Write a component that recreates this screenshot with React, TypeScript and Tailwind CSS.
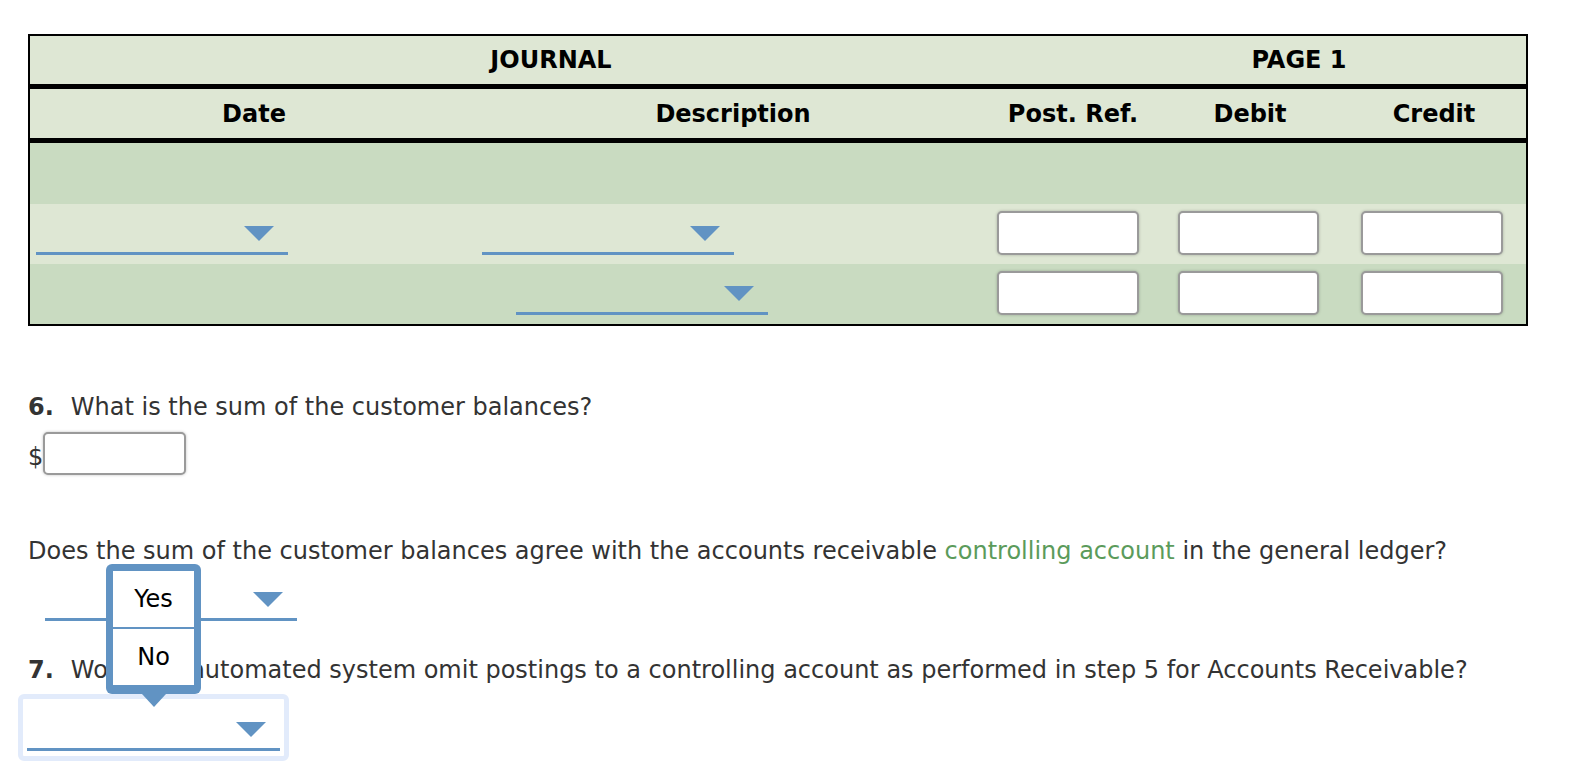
function Caret() {
  return (
    <svg width="30" height="15" viewBox="0 0 30 15" className="block">
      <polygon points="0,0 30,0 15,15" fill="#6193c3" />
    </svg>
  );
}

function Dropdown({ width }: { width: string }) {
  return (
    <div className={`${width} h-[37px] border-b-[3px] border-[#6193c3] flex justify-end items-start pt-[8px] pr-[14px]`}>
      <Caret />
    </div>
  );
}

function AmountBox({ className = "" }: { className?: string }) {
  return (
    <div
      className={`h-[44px] bg-white border-2 border-[#9a9a9a] rounded-[5px] shadow-[0_0_3px_rgba(0,0,0,0.25)] ${className}`}
    />
  );
}

function JournalRow({ shade, indent }: { shade: string; indent?: boolean }) {
  return (
    <div className={`grid grid-cols-[448px_510px_170px_184px_184px] h-[60px] ${shade}`}>
      <div className="pl-[6px] pt-[14px]">{!indent && <Dropdown width="w-[252px]" />}</div>
      <div className={`${indent ? "pl-[38px]" : "pl-[4px]"} pt-[14px]`}>
        <Dropdown width="w-[252px]" />
      </div>
      <div className="pl-[9px] pt-[7px]">
        <AmountBox className="w-[142px]" />
      </div>
      <div className="pl-[20px] pt-[7px]">
        <AmountBox className="w-[141px]" />
      </div>
      <div className="pl-[19px] pt-[7px]">
        <AmountBox className="w-[142px]" />
      </div>
    </div>
  );
}

export default function App() {
  return (
    <div className="min-h-screen bg-white font-['DejaVu_Sans',Verdana,sans-serif] text-[#333] pl-[28px] pt-[34px]">
      <div className="w-[1500px] border-2 border-black">
        <div className="grid grid-cols-[1042px_454px] h-[48px] items-center bg-[#dee7d4] text-black font-bold text-[24px]">
          <div className="text-center">JOURNAL</div>
          <div className="text-center">PAGE 1</div>
        </div>
        <div className="h-[5px] bg-black" />
        <div className="grid grid-cols-[448px_510px_170px_184px_184px] h-[49px] items-center bg-[#dee7d4] text-black font-bold text-[24px]">
          <div className="text-center">Date</div>
          <div className="text-center">Description</div>
          <div className="text-center">Post. Ref.</div>
          <div className="text-center">Debit</div>
          <div className="text-center">Credit</div>
        </div>
        <div className="h-[5px] bg-black" />
        <div className="h-[61px] bg-[#c9dbc1]" />
        <JournalRow shade="bg-[#dee7d4]" />
        <JournalRow shade="bg-[#c9dbc1]" indent />
      </div>

      <p className="mt-[66px] text-[24px] leading-[30px]">
        <span className="font-bold mr-[17px]">6.</span>What is the sum of the customer balances?
      </p>
      <div className="mt-[10px] flex items-center text-[24px]">
        <span className="mt-[6px]">$</span>
        <div className="w-[143px] h-[43px] bg-white border-2 border-[#9a9a9a] rounded-[5px] shadow-[0_0_3px_rgba(0,0,0,0.25)]" />
      </div>

      <p className="mt-[61px] text-[24px] leading-[30px]">
        Does the sum of the customer balances agree with the accounts receivable{" "}
        <span className="text-[#5b9b5b]">controlling account</span> in the general ledger?
      </p>
      <div className="mt-[18px] ml-[17px]">
        <Dropdown width="w-[252px]" />
      </div>

      <p className="mt-[34px] text-[24px] leading-[30px] whitespace-nowrap">
        <span className="font-bold mr-[17px]">7.</span>Would an automated system omit postings to a controlling account as
        performed in step 5 for Accounts Receivable?
      </p>
      <div className="relative mt-[9px] -ml-[10px] w-[271px] border-[5px] border-[#e2ebfb] rounded-[6px] bg-white pt-[15px] pb-[5px] px-[4px]">
        <Dropdown width="w-[253px]" />
        <div className="absolute left-[83px] top-[-135px] w-[95px]">
          <div className="bg-[#6193c3] rounded-[6px] p-[7px] pb-[9px]">
            <div className="bg-white text-black text-[24px]">
              <div className="h-[56px] flex items-center justify-center">Yes</div>
              <div className="h-[2px] bg-[#6193c3]" />
              <div className="h-[56px] flex items-center justify-center">No</div>
            </div>
          </div>
          <div className="mx-auto w-0 h-0 border-l-[12px] border-r-[12px] border-t-[13px] border-l-transparent border-r-transparent border-t-[#6193c3]" />
        </div>
      </div>
    </div>
  );
}
